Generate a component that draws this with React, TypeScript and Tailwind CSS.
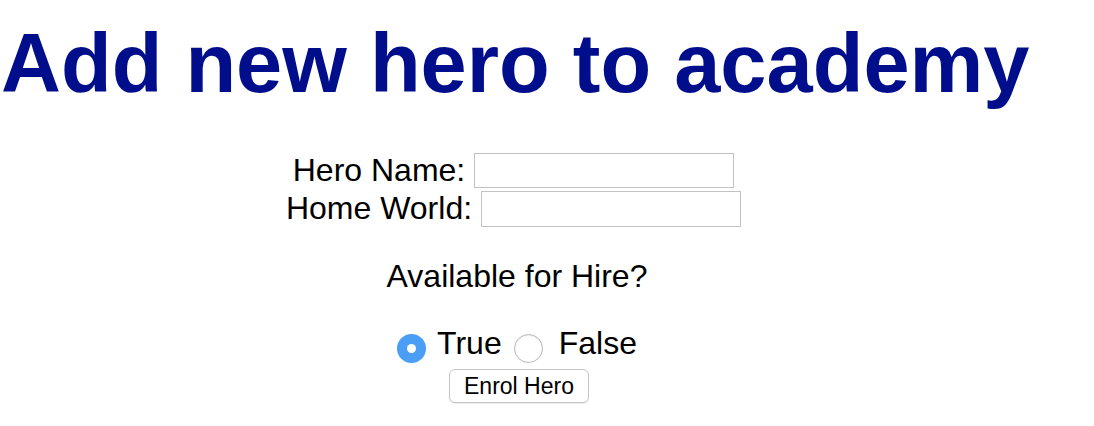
import React from "react";

export default function App() {
  return (
    <div className="w-[1094px] h-[426px] bg-white text-black overflow-hidden font-['Liberation_Sans',Arial,sans-serif]">
      <h1 className="text-[83px] leading-[95px] font-bold text-[#000e8c] pl-[1px] pt-[16px]">
        Add new hero to academy
      </h1>
      <div className="w-[1034px] flex flex-col items-center text-[32px] leading-[37px] mt-[41px]">
        <div className="flex items-center gap-[9px] pr-[7px]">
          <span>Hero Name:</span>
          <span className="w-[260px] h-[35px] border border-[#c2c2c2] bg-white"></span>
        </div>
        <div className="flex items-center gap-[9px] mt-[1px] pr-[7px]">
          <span>Home World:</span>
          <span className="w-[260px] h-[36px] border border-[#c2c2c2] bg-white"></span>
        </div>
        <div className="mt-[31px]">Available for Hire?</div>
        <div className="flex items-start mt-[30px]">
          <span className="mt-[9px] w-[29px] h-[29px] rounded-full bg-[#4a9ef5] flex items-center justify-center">
            <span className="w-[9px] h-[9px] rounded-full bg-white"></span>
          </span>
          <span className="ml-[11px]">True</span>
          <span className="mt-[9px] ml-[12px] w-[29px] h-[29px] rounded-full bg-white border border-[#b8b8b8] shadow-[inset_0_1px_2px_rgba(0,0,0,0.08)]"></span>
          <span className="ml-[16px]">False</span>
        </div>
        <button className="mt-[6px] ml-[4px] w-[140px] h-[34px] rounded-[6px] border border-[#c6c6c6] bg-white text-[23px] leading-[26px] shadow-[0_1px_1px_rgba(0,0,0,0.08)]">
          Enrol Hero
        </button>
      </div>
    </div>
  );
}
